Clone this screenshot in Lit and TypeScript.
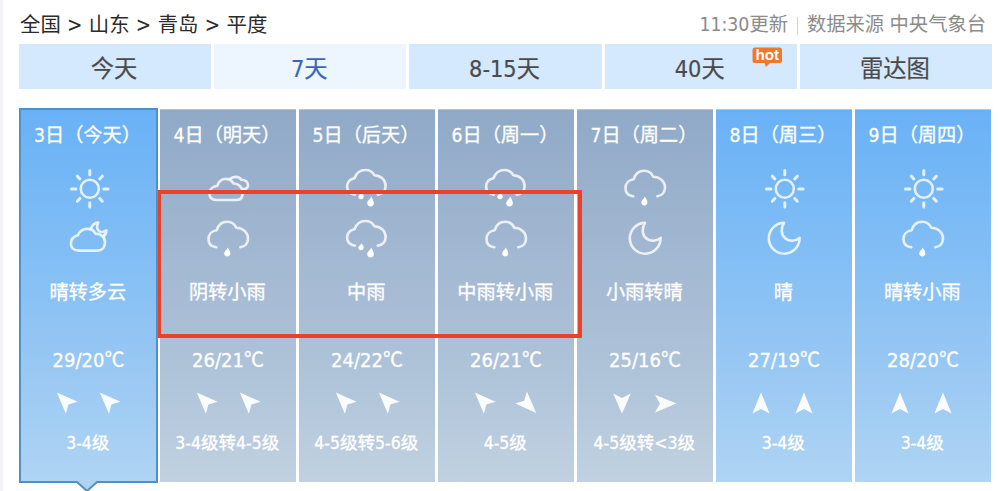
import { LitElement, html, css, svg } from "lit";
import { customElement, property } from "lit/decorators.js";
import { classMap } from "lit/directives/class-map.js";

type Sky = "sun" | "cloudy" | "cloudnight" | "lightrain" | "rain" | "moon";
type Wind = "n" | "s" | "e" | "nw" | "se";

interface Day {
  date: string;
  day: Sky;
  night: Sky;
  text: string;
  temp: string;
  winds: [Wind, Wind];
  level: string;
  grey?: boolean;
  active?: boolean;
}

const DAYS: Day[] = [
  { date: "3日（今天）", day: "sun", night: "cloudnight", text: "晴转多云", temp: "29/20℃", winds: ["nw", "nw"], level: "3-4级", active: true },
  { date: "4日（明天）", day: "cloudy", night: "lightrain", text: "阴转小雨", temp: "26/21℃", winds: ["nw", "nw"], level: "3-4级转4-5级", grey: true },
  { date: "5日（后天）", day: "rain", night: "rain", text: "中雨", temp: "24/22℃", winds: ["nw", "nw"], level: "4-5级转5-6级", grey: true },
  { date: "6日（周一）", day: "rain", night: "lightrain", text: "中雨转小雨", temp: "26/21℃", winds: ["nw", "se"], level: "4-5级", grey: true },
  { date: "7日（周二）", day: "lightrain", night: "moon", text: "小雨转晴", temp: "25/16℃", winds: ["s", "e"], level: "4-5级转<3级", grey: true },
  { date: "8日（周三）", day: "sun", night: "moon", text: "晴", temp: "27/19℃", winds: ["n", "n"], level: "3-4级" },
  { date: "9日（周四）", day: "sun", night: "lightrain", text: "晴转小雨", temp: "28/20℃", winds: ["n", "n"], level: "3-4级" },
];

const SKY: Record<Sky, unknown> = {
  sun: svg`<circle cx="24.8" cy="22.7" r="9"/>
    <path d="M24.8 4.4v4.4M24.8 36.7v4.4M6.5 22.9h4.4M38.7 22.9h4.4M12.3 10.2l2.6 2.8M37.3 10.2l-2.6 2.8M12.3 35.2l2.6-2.8M37.3 35.2l-2.6-2.8" class="ray"/>`,
  cloudy: svg`<path d="M13.3 19.7C14.8 15 18 12.9 22 12.9C25.6 12.9 28 14.6 29.3 17.5C33.5 17 38.7 21 38.7 26.5C38.7 31.5 36.5 34 33 34H12.3C8 34 5.5 31.5 5.5 27.5C5.5 23.5 8.5 20.2 13.3 19.7Z"/>
    <path d="M25.6 13.4C27.5 11.4 29.6 10.8 32 10.9C34.5 11 36.2 12 37.3 13.7C41.5 13.9 44 16.2 44 19C44 21.3 42.5 22.9 40 23"/>`,
  cloudnight: svg`<path d="M12.8 18.2C14.8 13.8 18 11.9 22.4 11.9C26.2 11.9 29 13.6 30.4 16.6C36 16.3 40 20.3 40 25.5C40 30.5 37.2 33.6 32.5 33.6H14C9 33.6 5.9 31 5.9 26.8C5.9 22.8 8.3 19.4 12.8 18.2Z"/>
    <path d="M25.8 11.7C27 8.3 29.3 5.9 33.2 5.6C31.6 9.5 31.6 12 33.7 13.8C35.8 15.5 38.5 15.2 41.5 13.5C41.2 16.3 40.3 18 38.5 19.2"/>`,
  lightrain: svg`<path d="M12.3 30.2C7.2 29.8 4.5 26.5 4.5 22.1C4.5 17.8 7.5 14 12.6 13.3C14.4 7.5 18 4.8 23.1 4.8C27.6 4.8 30.6 7 32.3 10.7C39.5 11 44 15.8 44 21.5C44 26.3 41 29.7 36.3 30.2"/>
    <path class="drop" d="M23.8 30.4C25.2 33 26.4 34.5 26.4 36.2C26.4 38.2 25.1 39.4 23.4 39.4C21.6 39.4 20.2 38.2 20.2 36.2C20.2 34.2 22.8 32.9 23.8 30.4Z"/>`,
  rain: svg`<path d="M11.8 28.6C7 27.8 4.1 24.6 4.1 20.6C4.1 16.5 7 13.2 11.4 12.2C13.6 6.7 17.3 4 22.2 4C26.9 4 29.7 6 31.3 9.2C38.5 9.6 42.6 14.2 42.6 20C42.6 24.6 39.6 28 34.8 28.6"/>
    <path class="drop" d="M18.7 26.2C20 28.5 20.7 29.3 20.7 30.6C20.7 32.3 19.6 33.2 18 33.2C16.4 33.2 15.3 32.3 15.3 30.6C15.3 29 17.8 28.2 18.7 26.2ZM28.2 30.6C29.7 33.5 30.9 35.3 30.9 37.2C30.9 39.2 29.5 40.4 27.6 40.4C25.6 40.4 24.2 39.2 24.2 37.2C24.2 35.2 27.2 33.4 28.2 30.6Z"/>`,
  moon: svg`<path d="M24 5.9A15.4 15.4 0 1 0 39.6 20.9C35.5 24.6 29.5 24.5 25.6 21.6C20.8 17.9 20.6 11.4 24 5.9Z"/>`,
};

const ARROW: Record<Wind, string> = {
  n: "M12 1.4L20.6 22.6L12 18L3.4 22.6Z",
  s: "M12 22.8L20.7 2.4L12 7L3.3 2.4Z",
  e: "M23.4 12.4L2 21.4L7 12.4L2 3.8Z",
  nw: "M3.8 1.4L24.6 10.8L15.4 13.6L12.9 22.8Z",
  se: "M22.2 22L1.4 12.4L10.2 9.8L12.9 .4Z",
};

/* Wraps every run of digits and signs so that it takes the Latin face. */
const mixed = (text: string) =>
  text.split(/([\x20-\x7e]+)/).filter(Boolean).map((part) =>
    /^[\x20-\x7e]/.test(part) ? html`<span class="latin">${part}</span>` : part);

const latin = css`
  .latin {
    font-family: "DejaVu Sans Condensed", "DejaVu Sans", sans-serif;
    font-stretch: condensed;
    font-size: 1em;
    line-height: 1;
    white-space: pre;
  }
`;

@customElement("day-column")
class DayColumn extends LitElement {
  @property({ attribute: false }) info!: Day;

  static styles = [latin, css`
    :host { display: block; }
    .column {
      position: relative;
      box-sizing: border-box;
      height: 373px;
      margin-top: 1px;
      display: flex;
      flex-direction: column;
      align-items: center;
      color: #fff;
      font-size: 19.2px;
      white-space: nowrap;
      -webkit-text-stroke: 0.3px #fff;
      background: linear-gradient(#69b1f6, #84bff5 42%, #99c8f3 70%, #afd4f4);
      box-shadow: inset 0 1px #a5cef5;
    }
    .grey {
      background: linear-gradient(#8fa9c7, #a4b9d2 42%, #afc4d9 72%, #c1d1e1);
      box-shadow: inset 0 1px #b4c5d8;
    }
    .active {
      height: 375px;
      margin: 0 -1px;
      border: 2px solid #5190c4;
      box-shadow: none;
    }
    .date {
      align-self: stretch;
      height: 57px;
      line-height: 51px;
      padding-left: 13.5px;
      box-sizing: border-box;
    }
    .active .date { height: 56px; line-height: 49px; padding-left: 13px; }
    .sky { display: block; width: 48px; height: 44px; margin-bottom: 7px; flex: none; }
    .sky path, .sky circle {
      fill: none;
      stroke: #fff;
      stroke-opacity: .8;
      stroke-width: 2.6;
      stroke-linecap: round;
      stroke-linejoin: round;
    }
    .sky .ray { stroke-width: 3; }
    .sky .drop { fill: #fff; stroke: none; }
    .text { height: 38px; line-height: 38px; margin: 4px 1.5px 0 0; }
    .temp { height: 38px; line-height: 38px; margin: 30px 0 0; font-size: 20px; }
    .winds { display: flex; gap: 19px; margin: 13px 4px 0 0; }
    .arrow { display: block; width: 24px; height: 24px; overflow: visible; fill: #fff; fill-opacity: .93; }
    .level { height: 32px; line-height: 32px; margin: 11px 1.5px 0 0; font-size: 17.5px; }
    .pointer {
      position: absolute;
      left: 52.5px;
      top: 370px;
      width: 26px;
      height: 12px;
      fill: #afd4f0;
      stroke: #5190c4;
      stroke-width: 2;
    }
  `];

  render() {
    const d = this.info;
    return html`
      <div class=${classMap({ column: true, grey: !!d.grey, active: !!d.active })}>
        <div class="date">${mixed(d.date)}</div>
        <svg class="sky" viewBox="0 0 48 44">${SKY[d.day]}</svg>
        <svg class="sky" viewBox="0 0 48 44">${SKY[d.night]}</svg>
        <div class="text">${d.text}</div>
        <div class="temp">${mixed(d.temp)}</div>
        <div class="winds">
          ${d.winds.map((w) => html`<svg class="arrow" viewBox="0 0 24 24"><path d=${ARROW[w]}></path></svg>`)}
        </div>
        <div class="level">${mixed(d.level)}</div>
        ${d.active ? html`<svg class="pointer" viewBox="0 0 26 12"><path d="M1 2H3L13 11L23 2H25V0H1Z" stroke="none"></path><path d="M0 2H3L13 11L23 2H26" fill="none"></path></svg>` : ""}
      </div>
    `;
  }
}

@customElement("app-root")
class AppRoot extends LitElement {
  static styles = [latin, css`
    :host {
      display: block;
      box-sizing: border-box;
      width: 1000px;
      height: 491px;
      overflow: hidden;
      position: relative;
      background: #fff;
      border-left: 3px solid #f2f3f6;
      padding-left: 16px;
      font-family: "Noto Sans CJK SC", sans-serif;
    }
    .head {
      height: 44px;
      display: flex;
      justify-content: space-between;
      padding: 0 6px 0 1px;
      box-sizing: border-box;
      width: 973px;
      white-space: nowrap;
      line-height: 46px;
    }
    .crumbs { color: #2b2b2b; font-size: 20.4px; }
    .crumbs .latin { letter-spacing: 0.35px; }
    .source { color: #8b8b8b; font-size: 19.3px; }
    .bar { display: inline-block; width: 1px; height: 18px; margin: 0 9px; background: #d2d2d2; vertical-align: -4px; }
    .tabs { display: grid; grid-template-columns: repeat(5, 1fr); grid-template-rows: 44.5px; gap: 3px; width: 973px; height: 44.5px; }
    .tab {
      position: relative;
      background: #d4e9fe;
      color: #4b4b4b;
      font-size: 23.3px;
      line-height: 47px;
      height: 44.5px;
      text-align: center;
      box-sizing: border-box;
      padding-right: 2px;
      -webkit-text-stroke: 0.2px currentColor;
    }
    .current { background: #edf6fe; color: #3b65bd; }
    .hot { position: absolute; left: 147.5px; top: 3px; width: 31px; height: 21px; }
    .hot text { font: bold 14px "Liberation Sans", sans-serif; fill: #fff; }
    .days { display: grid; grid-template-columns: repeat(7, 136px); gap: 3px; margin: 19.5px 0 0 2px; width: max-content; }
    .mark {
      position: absolute;
      left: 155px;
      top: 190px;
      width: 424px;
      height: 148px;
      box-sizing: border-box;
      border: solid #ec4129;
      border-width: 4px 4px 4px 3px;
    }
    .days > :first-child { margin-left: -1px; }
  `];

  render() {
    return html`
      <div class="head">
        <div class="crumbs">${mixed("全国 > 山东 > 青岛 > 平度")}</div>
        <div class="source">${mixed("11:30更新")}<span class="bar"></span>${mixed("数据来源 中央气象台")}</div>
      </div>
      <div class="tabs">
        ${["今天", "7天", "8-15天", "40天", "雷达图"].map((t, i) => html`
          <div class=${classMap({ tab: true, current: i === 1 })}>${mixed(t)}${i === 3 ? html`
            <svg class="hot" viewBox="0 0 31 21">
              <path d="M3 .5H27.5Q30 .5 30 3V13.5Q30 16 27.5 16H18L14 20L12.5 16H3Q.5 16 .5 13.5V3Q.5 .5 3 .5Z" fill="#f1762e"></path>
              <text x="3.5" y="13.3" textLength="23.5" lengthAdjust="spacingAndGlyphs">hot</text>
            </svg>` : ""}</div>`)}
      </div>
      <div class="days">
        ${DAYS.map((d) => html`<day-column .info=${d}></day-column>`)}
      </div>
      <div class="mark"></div>
    `;
  }
}
